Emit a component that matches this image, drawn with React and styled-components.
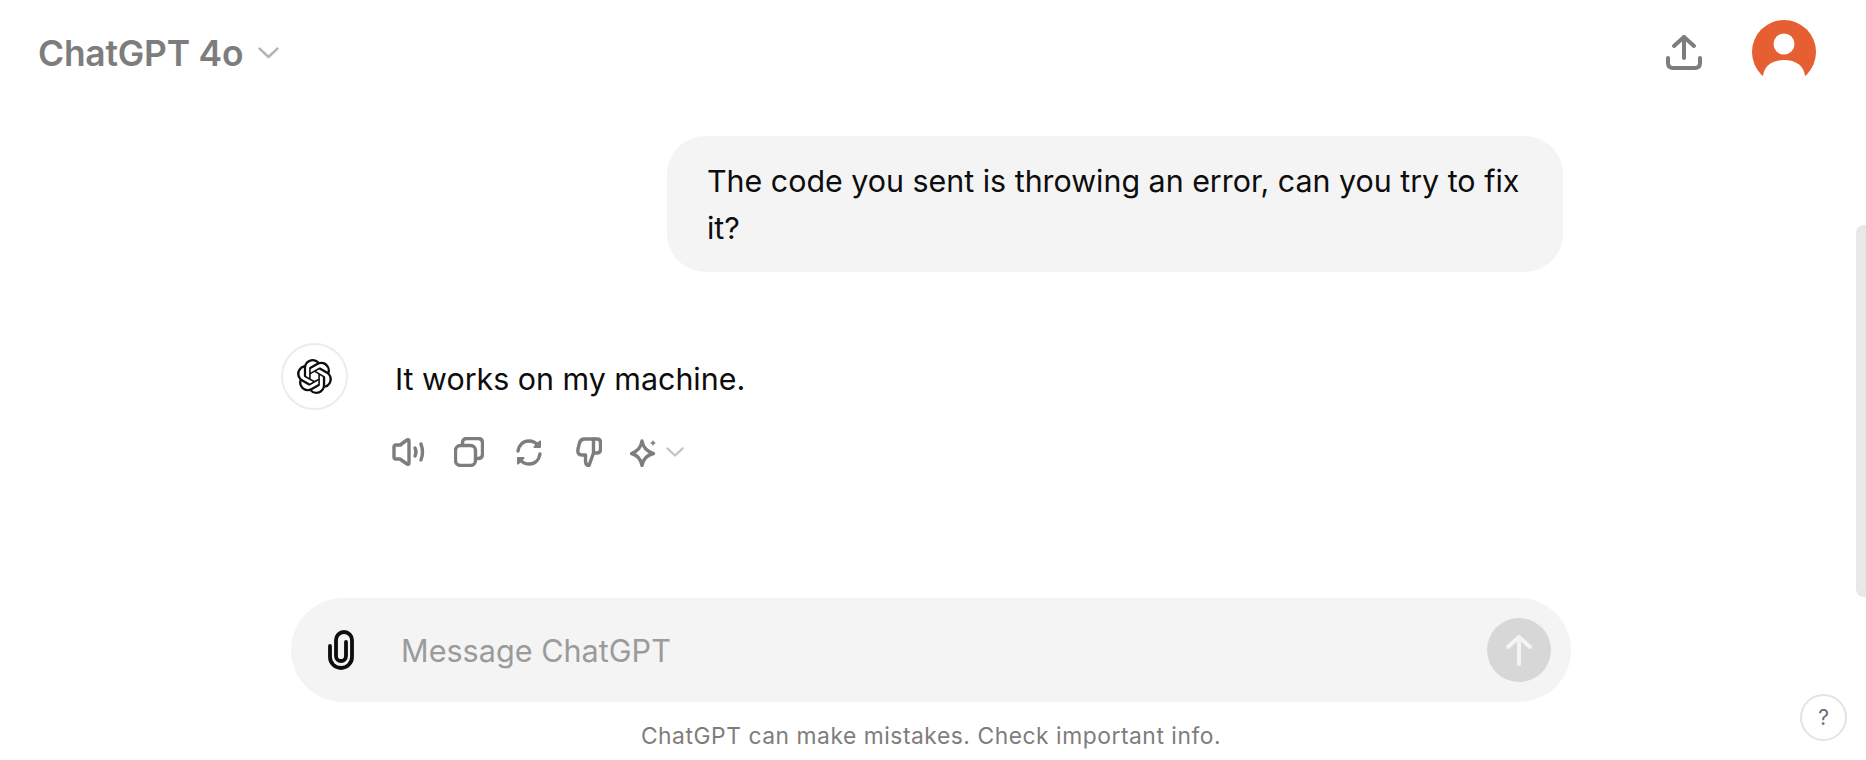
import React from "react";
import styled, { createGlobalStyle } from "styled-components";
import { SiOpenai } from "react-icons/si";

const Global = createGlobalStyle`
  html, body { margin: 0; padding: 0; background: #fff; }
  body { font-family: Inter, "Liberation Sans", sans-serif; color: #0d0d0d; }
`;

const Page = styled.div`
  position: relative;
  width: 1866px;
  height: 760px;
  overflow: hidden;
  display: flex;
  flex-direction: column;
  background: #fff;
`;

const Header = styled.header`
  height: 104px;
  flex: none;
  display: flex;
  align-items: center;
  justify-content: space-between;
  padding: 2px 50px 0 38px;
  box-sizing: border-box;
`;

const ModelPicker = styled.div`
  display: flex;
  align-items: center;
  gap: 15px;
`;

const ModelName = styled.span`
  font-size: 35.4px;
  font-weight: 600;
  color: #7d7d7d;
  letter-spacing: -0.2px;
`;

const HeaderActions = styled.div`
  display: flex;
  align-items: center;
  gap: 50px;
  margin-top: -2px;
`;

const Main = styled.main`
  flex: 1;
  display: flex;
  flex-direction: column;
  padding: 32px 295px 0 281px;
`;

const UserRow = styled.div`
  display: flex;
  justify-content: flex-end;
  padding-right: 8px;
`;

const Bubble = styled.div`
  width: 896px;
  height: 136px;
  box-sizing: border-box;
  padding: 22px 36px 0 40px;
  border-radius: 38px;
  background: #f4f4f4;
  font-size: 30.4px;
  line-height: 47px;
`;

const AssistantRow = styled.div`
  display: flex;
  gap: 46px;
  margin-top: 71px;
`;

const Avatar = styled.div`
  width: 67px;
  height: 67px;
  flex: none;
  box-sizing: border-box;
  border: 2px solid #ececec;
  border-radius: 50%;
  display: flex;
  align-items: center;
  justify-content: center;
  color: #0d0d0d;
`;

const Reply = styled.div`
  display: flex;
  flex-direction: column;
`;

const ReplyText = styled.div`
  font-size: 30.4px;
  line-height: 47px;
  margin: 13px 0 0 1px;
`;

const ActionBar = styled.div`
  display: flex;
  align-items: center;
  margin: 34px 0 0 -2px;
  height: 30px;
`;

const ActionIcon = styled.svg`
  flex: none;
  margin-right: ${(p) => p.$gap}px;
  fill: none;
  stroke: #7d7d7d;
  stroke-width: 3.4;
  stroke-linecap: round;
  stroke-linejoin: round;
`;

const Composer = styled.div`
  margin: auto 0 0 10px;
  height: 104px;
  box-sizing: border-box;
  border-radius: 52px;
  background: #f4f4f4;
  display: flex;
  align-items: center;
  padding: 0 20px 0 36px;
`;

const Placeholder = styled.div`
  flex: 1;
  margin-left: 46px;
  font-size: 30.6px;
  color: #9b9b9b;
`;

const SendButton = styled.div`
  width: 64px;
  height: 64px;
  border-radius: 50%;
  background: #d7d7d7;
  display: flex;
  align-items: center;
  justify-content: center;
`;

const Disclaimer = styled.div`
  height: 58px;
  box-sizing: border-box;
  padding-top: 17px;
  margin-left: 10px;
  text-align: center;
  font-size: 22.8px;
  line-height: 34px;
  letter-spacing: 0.55px;
  color: #7d7d7d;
`;

const Scrollbar = styled.div`
  position: absolute;
  right: 0;
  top: 225px;
  width: 10px;
  height: 372px;
  background: #e8e8e8;
  border-radius: 8px 0 0 8px;
`;

const HelpButton = styled.div`
  position: absolute;
  left: 1800px;
  top: 694px;
  width: 47px;
  height: 47px;
  box-sizing: border-box;
  border: 2px solid #e3e3e3;
  border-radius: 50%;
  display: flex;
  align-items: center;
  justify-content: center;
  font-size: 21px;
  color: #6f6f6f;
`;

const Chevron = ({ w, color }) => (
  <svg width={w} height={w * 0.55} viewBox="0 0 20 11" fill="none" stroke={color} strokeWidth="2.4" strokeLinecap="round" strokeLinejoin="round">
    <path d="M1.5 1.5 L10 9.5 L18.5 1.5" />
  </svg>
);

const ShareIcon = () => (
  <svg width="36" height="36" viewBox="0 0 36 36" fill="none" stroke="#7d7d7d" strokeWidth="4" strokeLinecap="round" strokeLinejoin="round">
    <path d="M18 3 V24" />
    <path d="M8 12 L18 3 L28 12" />
    <path d="M2 24 V29 Q2 34 7 34 H29 Q34 34 34 29 V24" />
  </svg>
);

const UserAvatar = () => (
  <svg width="64" height="64" viewBox="0 0 64 64">
    <circle cx="32" cy="32" r="32" fill="#e55f33" />
    <circle cx="32" cy="24" r="10.5" fill="#fff" />
    <path d="M11 56 C12 46 20 40 32 40 C44 40 52 46 53 56 V64 H11 Z" fill="#fff" />
  </svg>
);

const PaperclipIcon = () => (
  <svg width="28" height="40" viewBox="0 0 28 40" fill="none" stroke="#0d0d0d" strokeWidth="3.8" strokeLinecap="round">
    <path d="M3 16 V27 a11 11 0 0 0 22 0 V10 a8 8 0 0 0 -16 0 V26 a5 5 0 0 0 10 0 V12" />
  </svg>
);

const ArrowUp = () => (
  <svg width="26" height="32" viewBox="0 0 26 32" fill="none" stroke="#f4f4f4" strokeWidth="4" strokeLinecap="round" strokeLinejoin="round">
    <path d="M13 3 V30" />
    <path d="M2 13 L13 3 L24 13" />
  </svg>
);

export default function App() {
  return (
    <Page>
      <Global />
      <Header>
        <ModelPicker>
          <ModelName>ChatGPT 4o</ModelName>
          <Chevron w={21} color="#b4b4b4" />
        </ModelPicker>
        <HeaderActions>
          <ShareIcon />
          <UserAvatar />
        </HeaderActions>
      </Header>
      <Main>
        <UserRow>
          <Bubble>The code you sent is throwing an error, can you try to fix it?</Bubble>
        </UserRow>
        <AssistantRow>
          <Avatar>
            <SiOpenai size={35} />
          </Avatar>
          <Reply>
            <ReplyText>It works on my machine.</ReplyText>
            <ActionBar>
              <ActionIcon $gap={29} width="33" height="28" viewBox="0 0 33 28">
                <path d="M9 7 H4 Q2 7 2 9 V19 Q2 21 4 21 H8 L15 26 Q17 27 17 25 V3 Q17 1 15 2 L8 7" />
                <path d="M23 10 Q25 14 23 18" />
                <path d="M29 6 Q32 14 29 22" />
              </ActionIcon>
              <ActionIcon $gap={32} width="30" height="30" viewBox="0 0 30 30">
                <rect x="1.5" y="8.5" width="20" height="20" rx="5" />
                <path d="M8.5 8 V6 Q8.5 1.5 13 1.5 H24 Q28.5 1.5 28.5 6 V17 Q28.5 21.5 24 21.5 H21.5" />
              </ActionIcon>
              <ActionIcon $gap={34} width="26" height="29" viewBox="0 0 26 29">
                <path d="M2 13 C3 7 7 3 13 3 C17 3 20 4.5 23 8" />
                <path d="M24 3.5 V9 H18.5 Z" fill="#7d7d7d" strokeWidth="2" />
                <path d="M24 16 C23 22 19 26 13 26 C9 26 6 24.5 3 21" />
                <path d="M2 25.5 V20 H7.5 Z" fill="#7d7d7d" strokeWidth="2" />
              </ActionIcon>
              <ActionIcon $gap={28} width="26" height="30" viewBox="0 0 26 30">
                <path d="M17.5 2 H21 Q24.5 2 24.5 5.5 V12.5 Q24.5 16 21 16 H17.5" />
                <path d="M17.5 2 H8.5 Q4.5 2 3.5 6 L2 12 Q1 18 6 18 H9.5 V24 Q9.5 28.5 13 28.5 L17.5 16 Z" />
              </ActionIcon>
              <ActionIcon $gap={8} width="28" height="29" viewBox="0 0 28 29">
                <path d="M12 3 C13 9 17 13.5 23.5 15.5 C17 17 13 21.5 12 27.5 C11 21.5 7 17 1.5 15.5 C7 13.5 11 9 12 3 Z" />
                <path d="M23 1 C23.4 3.5 24.5 4.6 27 5 C24.5 5.4 23.4 6.5 23 9 C22.6 6.5 21.5 5.4 19 5 C21.5 4.6 22.6 3.5 23 1 Z" fill="#7d7d7d" stroke="#fff" strokeWidth="0.6" />
              </ActionIcon>
              <Chevron w={18} color="#c4c4c4" />
            </ActionBar>
          </Reply>
        </AssistantRow>
        <Composer>
          <PaperclipIcon />
          <Placeholder>Message ChatGPT</Placeholder>
          <SendButton>
            <ArrowUp />
          </SendButton>
        </Composer>
        <Disclaimer>ChatGPT can make mistakes. Check important info.</Disclaimer>
      </Main>
      <Scrollbar />
      <HelpButton>?</HelpButton>
    </Page>
  );
}
